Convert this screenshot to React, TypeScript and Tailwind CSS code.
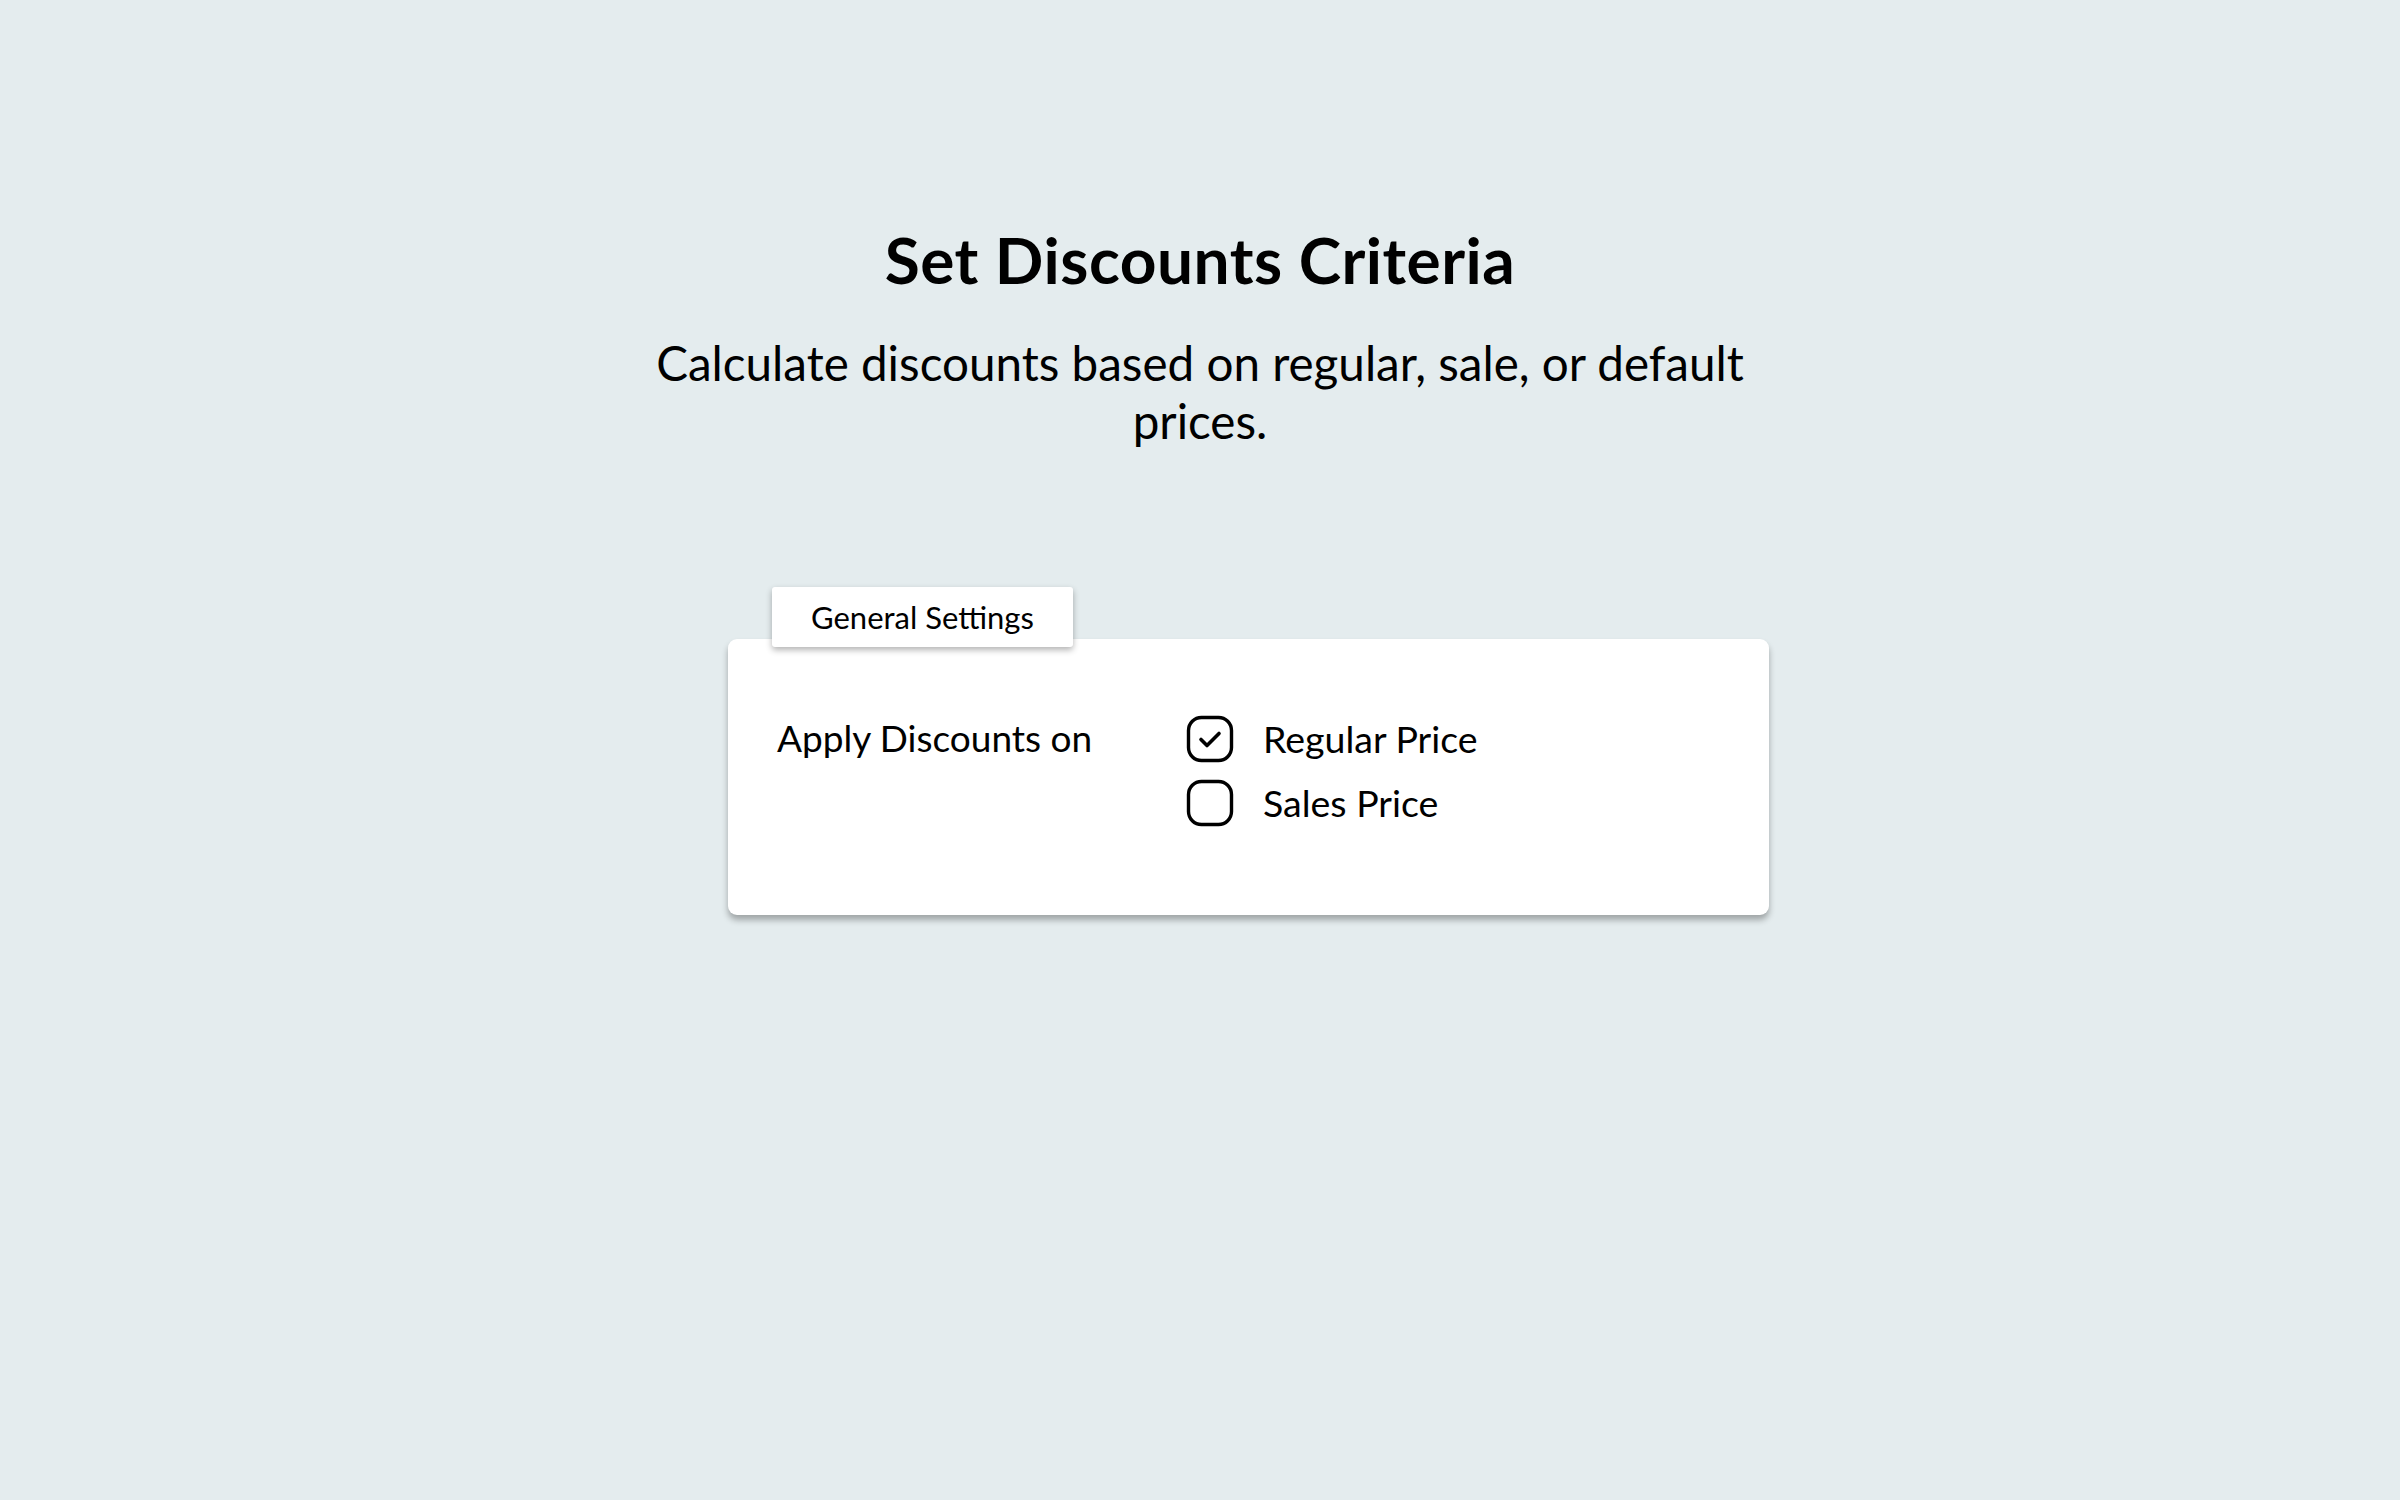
import React, { useState } from 'react';

const CheckBox: React.FC<{ checked: boolean }> = ({ checked }) => (
  <svg width="48" height="48" viewBox="0 0 48 48" fill="none" className="shrink-0">
    <rect x="2.5" y="2.5" width="43" height="43" rx="13" stroke="#000" strokeWidth="3.4" />
    {checked && (
      <path d="M15 24.5 L21 30.5 L33 18.5" stroke="#000" strokeWidth="3.6" strokeLinecap="round" strokeLinejoin="round" />
    )}
  </svg>
);

const App: React.FC = () => {
  const [options, setOptions] = useState([
    { id: 'regular', label: 'Regular Price', checked: true },
    { id: 'sales', label: 'Sales Price', checked: false },
  ]);

  const toggle = (id: string) =>
    setOptions(prev => prev.map(o => (o.id === id ? { ...o, checked: !o.checked } : o)));

  return (
    <div className="min-h-screen w-full bg-[#e4ecee] text-black font-['Lato',sans-serif]">
      <div className="flex flex-col items-center pt-[220px]">
        <h1 className="text-[64px] leading-[80px] font-bold tracking-[0.5px]">Set Discounts Criteria</h1>
        <p className="mt-[34px] w-[1160px] text-center text-[47.6px] leading-[58px]">
          Calculate discounts based on regular, sale, or default prices.
        </p>
      </div>

      {/* Settings card */}
      <div className="ml-[728px] mt-[137px] w-[1041px]">
        <div className="relative z-10 -mb-2 ml-[44px] inline-flex h-[60px] items-center rounded-[3px] bg-white px-[39px] text-[31px] shadow-[0_3px_6px_rgba(0,0,0,0.3)]">
          General Settings
        </div>
        <div className="flex rounded-[9px] bg-white pl-[49px] pt-[76px] pb-[88px] shadow-[0_5px_6px_rgba(0,0,0,0.3)]">
          <div className="w-[409px] text-[37px] leading-[46px]">Apply Discounts on</div>
          <div className="flex flex-col gap-[16px]">
            {options.map(o => (
              <button
                key={o.id}
                onClick={() => toggle(o.id)}
                className="flex items-center gap-[29px] text-left text-[37.5px] leading-[48px]"
              >
                <CheckBox checked={o.checked} />
                <span>{o.label}</span>
              </button>
            ))}
          </div>
        </div>
      </div>
    </div>
  );
};

export default App;
